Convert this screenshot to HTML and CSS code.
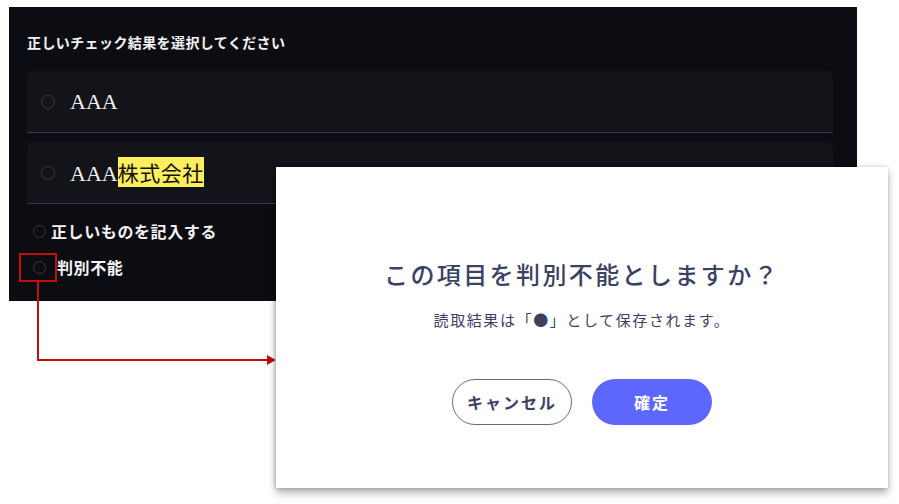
FILE: index.html
```html
<!DOCTYPE html>
<html lang="ja">
  <head>
    <meta charset="UTF-8">
    <meta name="viewport" content="width=device-width, initial-scale=1.0">
    <title>判別不能の確認</title>
    <link rel="stylesheet" href="styles.css">
  </head>
  <body>
    <div class="stage">

      <div class="panel">
        <div class="panel-title">正しいチェック結果を選択してください</div>

        <div class="card">
          <span class="radio"></span>
          <span class="card-text">AAA</span>
        </div>
        <div class="card card-second">
          <span class="radio"></span>
          <span class="card-text">AAA<mark class="mark">株式会社</mark></span>
        </div>

        <div class="choice">
          <span class="radio radio-small"></span>
          <span class="choice-text">正しいものを記入する</span>
        </div>
        <div class="choice">
          <span class="radio radio-small"></span>
          <span class="choice-text choice-text-wide">判別不能</span>
        </div>
      </div>

      <!-- 注釈：赤枠と矢印 -->
      <div class="callout-box"></div>
      <svg class="callout-arrow" width="280" height="90" viewBox="0 0 280 90">
        <polyline points="29,0 29,79 260,79" fill="none" stroke="#c40d0d" stroke-width="2"/>
        <polygon points="258,74 267,79 258,84" fill="#c40d0d"/>
      </svg>

      <div class="modal">
        <div class="modal-title">この項目を判別不能としますか？</div>
        <div class="modal-text">読取結果は「●」として保存されます。</div>
        <div class="modal-buttons">
          <button class="btn btn-cancel">キャンセル</button>
          <button class="btn btn-ok">確定</button>
        </div>
      </div>

    </div>
  </body>
</html>
```

FILE: styles.css
```css
html, body {
  margin: 0;
  padding: 0;
  background-color: #ffffff;
  font-family: "Noto Sans CJK JP", "Noto Sans", sans-serif;
}
.stage {
  position: relative;
  width: 899px;
  height: 504px;
  padding-top: 7px;
  box-sizing: border-box;
}
.panel {
  margin-left: 9px;
  width: 848px;
  height: 294px;
  box-sizing: border-box;
  padding: 25px 24px 0 18px;
  background-color: #0c0d12;
  display: flex;
  flex-direction: column;
}
.panel-title {
  font-size: 14px;
  line-height: 20px;
  font-weight: 700;
  letter-spacing: 0.4px;
  color: #f2f2f4;
  margin-bottom: 19px;
}
.card {
  display: flex;
  align-items: center;
  height: 61px;
  padding-left: 14px;
  background-color: #131419;
  border-radius: 6px 6px 0 0;
  border-bottom: 1px solid #3a384f;
}
.card-second {
  margin-top: 9px;
}
.radio {
  width: 14px;
  height: 14px;
  box-sizing: border-box;
  border: 1.5px solid #393a48;
  border-radius: 50%;
  flex-shrink: 0;
}
.radio-small {
  width: 13px;
  height: 13px;
}
.card-text {
  margin-left: 15px;
  font-family: "Liberation Serif", "Noto Sans CJK JP", serif;
  font-size: 22px;
  line-height: 31px;
  color: #f0f0f0;
}
.mark {
  background-color: #fdee5e;
  color: #111111;
  font-family: "Noto Sans CJK JP", sans-serif;
  font-size: 21px;
  letter-spacing: 0.5px;
}
.choice {
  display: flex;
  align-items: center;
  height: 36px;
  padding-left: 6px;
}
.card + .card + .choice {
  margin-top: 9px;
}
.choice-text {
  margin-left: 5px;
  font-size: 16px;
  font-weight: 700;
  letter-spacing: 0.6px;
  color: #f4f4f6;
}
.choice-text-wide {
  margin-left: 11px;
}

/* 注釈 */
.callout-box {
  position: absolute;
  left: 19px;
  top: 253px;
  width: 38px;
  height: 29px;
  box-sizing: border-box;
  border: 2px solid #c40d0d;
}
.callout-arrow {
  position: absolute;
  left: 9px;
  top: 281px;
}

/* ダイアログ */
.modal {
  position: absolute;
  left: 276px;
  top: 167px;
  width: 612px;
  height: 321px;
  background-color: #ffffff;
  box-shadow: 0 5px 8px rgba(0, 0, 0, 0.3), -1px 0 4px rgba(0, 0, 0, 0.2);
  display: flex;
  flex-direction: column;
  align-items: center;
  padding-top: 91px;
  box-sizing: border-box;
}
.modal-title {
  font-size: 24px;
  line-height: 32px;
  font-weight: 500;
  letter-spacing: 2.4px;
  color: #3b4163;
}
.modal-text {
  margin-top: 19px;
  font-size: 15px;
  line-height: 22px;
  font-weight: 400;
  letter-spacing: 1.6px;
  color: #3b4163;
}
.modal-buttons {
  margin-top: 48px;
  display: flex;
  gap: 20px;
}
.btn {
  width: 120px;
  height: 46px;
  border-radius: 23px;
  font-family: "Noto Sans CJK JP", sans-serif;
  font-size: 16px;
  font-weight: 700;
  letter-spacing: 2px;
  cursor: pointer;
}
.btn-cancel {
  background-color: #ffffff;
  border: 1px solid #676a7c;
  color: #3b4163;
}
.btn-ok {
  background-color: #5e67fb;
  border: none;
  color: #ffffff;
}
```
